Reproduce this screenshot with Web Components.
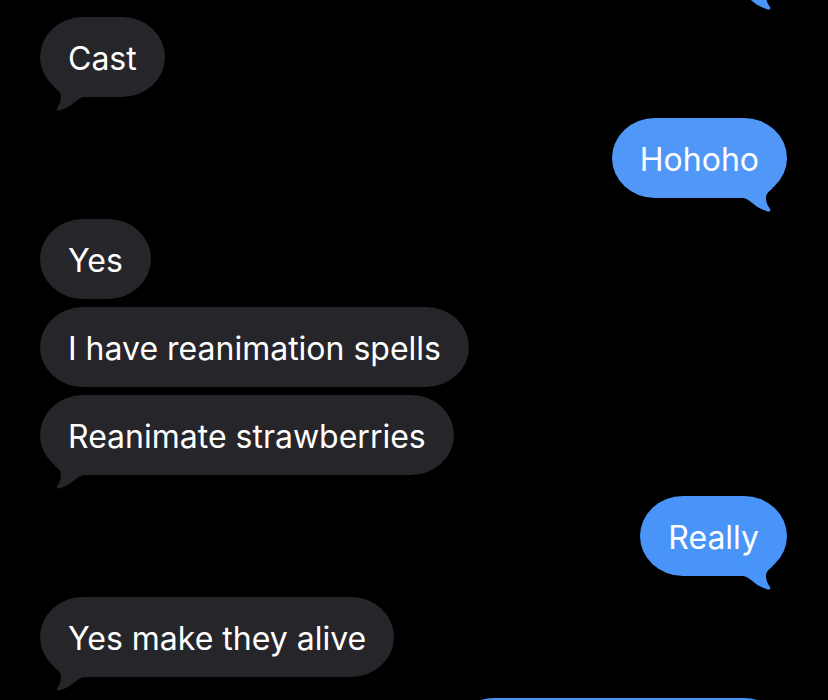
<!DOCTYPE html>
<html lang="en">
<head>
  <meta charset="utf-8">
  <meta name="viewport" content="width=device-width, initial-scale=1">
  <title>Messages</title>
  <style>
    body {
      margin: 0;
      background: #000;
      font-family: Inter, "Liberation Sans", sans-serif;
    }
  </style>
</head>
<body>
  <message-thread>
    <message-group from="me">
      <message-bubble class="long" tail></message-bubble>
    </message-group>
    <message-group from="them">
      <message-bubble tail>Cast</message-bubble>
    </message-group>
    <message-group from="me" style="--blue: #5197f7">
      <message-bubble tail>Hohoho</message-bubble>
    </message-group>
    <message-group from="them">
      <message-bubble>Yes</message-bubble>
      <message-bubble>I have reanimation spells</message-bubble>
      <message-bubble tail>Reanimate strawberries</message-bubble>
    </message-group>
    <message-group from="me">
      <message-bubble tail>Really</message-bubble>
    </message-group>
    <message-group from="them">
      <message-bubble tail>Yes make they alive</message-bubble>
    </message-group>
    <message-group from="me">
      <message-bubble class="long" tail></message-bubble>
    </message-group>
  </message-thread>

  <script>
    class MessageThread extends HTMLElement {
      constructor() {
        super();
        this.attachShadow({ mode: 'open' });
        this.shadowRoot.innerHTML = `
          <style>
            :host {
              display: block;
              height: 100vh;
              overflow: hidden;
            }

            /* the thread is scrolled past most of its first message */
            .messages {
              display: flex;
              flex-direction: column;
              gap: 21px;
              margin-top: -84px;
              padding: 0 41px 0 40px;
            }
          </style>
          <div class="messages"><slot></slot></div>
        `;
      }
    }

    class MessageGroup extends HTMLElement {
      constructor() {
        super();
        this.attachShadow({ mode: 'open' });
        this.shadowRoot.innerHTML = `
          <style>
            :host {
              --bubble: #26252a;
              display: flex;
              flex-direction: column;
              align-items: flex-start;
              gap: 8px;
            }

            :host([from="me"]) {
              --bubble: var(--blue, #4894f8);
              align-items: flex-end;
            }
          </style>
          <slot></slot>
        `;
      }
    }

    class MessageBubble extends HTMLElement {
      constructor() {
        super();
        this.attachShadow({ mode: 'open' });
        this.shadowRoot.innerHTML = `
          <style>
            :host {
              display: block;
              position: relative;
              box-sizing: border-box;
              min-height: 80px;
              max-width: 75%;
              padding: 22px 28px 18px;
              border-radius: 43px / 40px;
              background: var(--bubble);
              color: #fff;
              font-size: 32px;
              line-height: 40px;
            }

            :host(.long) {
              width: 336px;
            }

            svg {
              display: none;
              position: absolute;
              left: 12px;
              bottom: -14px;
              fill: var(--bubble);
            }

            :host([tail]) svg {
              display: block;
            }

            :host-context([from="me"]) svg {
              left: auto;
              right: 12px;
              transform: scaleX(-1);
            }
          </style>
          <slot></slot>
          <svg width="36" height="30" viewBox="0 0 36 30" aria-hidden="true">
            <path d="M2 6 C7 10 9 12 9 16 C9 21 7 24 5 27 C4 29 5.500 30 8 29.300 C12 28 15 26.500 18 24.700 C22 22 25 19 28 17.300 C30 16.300 31 16 34 16 L34 4 Z"/>
          </svg>
        `;
      }
    }

    customElements.define('message-thread', MessageThread);
    customElements.define('message-group', MessageGroup);
    customElements.define('message-bubble', MessageBubble);
  </script>
</body>
</html>
